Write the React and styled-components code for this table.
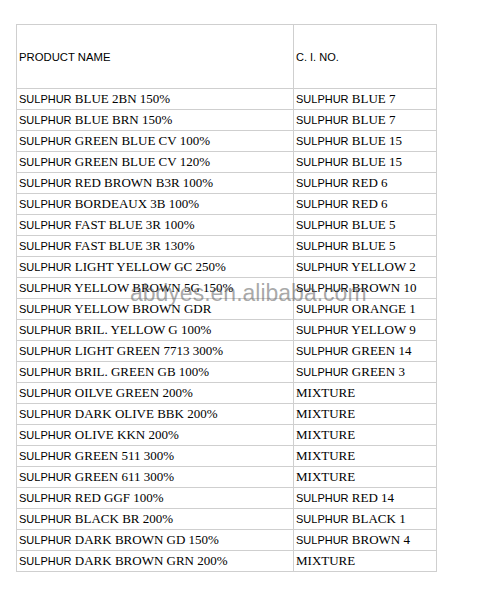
import styled, { createGlobalStyle } from "styled-components";

const GlobalStyle = createGlobalStyle`
    body {
        margin: 0;
        background: #fff;
    }
`;

const Page = styled.div`
    position: relative;
    padding: 24px 0 0 16px;
    width: 502px;
    height: 592px;
    box-sizing: border-box;
`;

const Table = styled.table`
    border-collapse: collapse;
    width: 420px;
    table-layout: fixed;
`;

const Cell = styled.td`
    border: 1px solid #cfcfcf;
    padding: 0 2px;
    height: ${(p) => (p.$head ? "63px" : "20px")};
    line-height: 20px;
    vertical-align: middle;
    white-space: nowrap;
    overflow: hidden;
    color: #000;
    font-family: "Liberation Serif", serif;
    font-size: 13px;
`;

const Sans = styled.span`
    font-family: "Liberation Sans", Arial, sans-serif;
    font-size: ${(p) => p.$size || "11px"};
`;

// site watermark laid over the table
const Watermark = styled.div`
    position: absolute;
    left: 130px;
    top: 280px;
    font-family: "Liberation Sans", Arial, sans-serif;
    font-size: 23px;
    color: rgba(95, 95, 95, 0.55);
    pointer-events: none;
`;

const rows = [
    ["BLUE 2BN 150%", "BLUE 7"],
    ["BLUE BRN 150%", "BLUE 7"],
    ["GREEN BLUE CV 100%", "BLUE 15"],
    ["GREEN BLUE CV 120%", "BLUE 15"],
    ["RED BROWN B3R 100%", "RED 6"],
    ["BORDEAUX 3B 100%", "RED 6"],
    ["FAST BLUE 3R 100%", "BLUE 5"],
    ["FAST BLUE 3R 130%", "BLUE 5"],
    ["LIGHT YELLOW GC 250%", "YELLOW 2"],
    ["YELLOW BROWN 5G 150%", "BROWN 10"],
    ["YELLOW BROWN GDR", "ORANGE 1"],
    ["BRIL. YELLOW G 100%", "YELLOW 9"],
    ["LIGHT GREEN 7713 300%", "GREEN 14"],
    ["BRIL. GREEN GB 100%", "GREEN 3"],
    ["OILVE GREEN 200%", null],
    ["DARK OLIVE BBK 200%", null],
    ["OLIVE KKN 200%", null],
    ["GREEN 511 300%", null],
    ["GREEN 611 300%", null],
    ["RED GGF 100%", "RED 14"],
    ["BLACK BR 200%", "BLACK 1"],
    ["DARK BROWN GD 150%", "BROWN 4"],
    ["DARK BROWN GRN 200%", null],
];

const Dye = ({ name }) => (
    <>
        <Sans>SULPHUR</Sans> {name}
    </>
);

export default function App() {
    return (
        <Page>
            <GlobalStyle />
            <Table>
                <colgroup>
                    <col style={{ width: "277px" }} />
                    <col style={{ width: "143px" }} />
                </colgroup>
                <tbody>
                    <tr>
                        <Cell $head>
                            <Sans $size="11.3px">PRODUCT NAME</Sans>
                        </Cell>
                        <Cell $head>
                            <Sans>C. I. NO.</Sans>
                        </Cell>
                    </tr>
                    {rows.map(([name, ci], i) => (
                        <tr key={i}>
                            <Cell>
                                <Dye name={name} />
                            </Cell>
                            <Cell>{ci ? <Dye name={ci} /> : "MIXTURE"}</Cell>
                        </tr>
                    ))}
                </tbody>
            </Table>
            <Watermark>abdyes.en.alibaba.com</Watermark>
        </Page>
    );
}
